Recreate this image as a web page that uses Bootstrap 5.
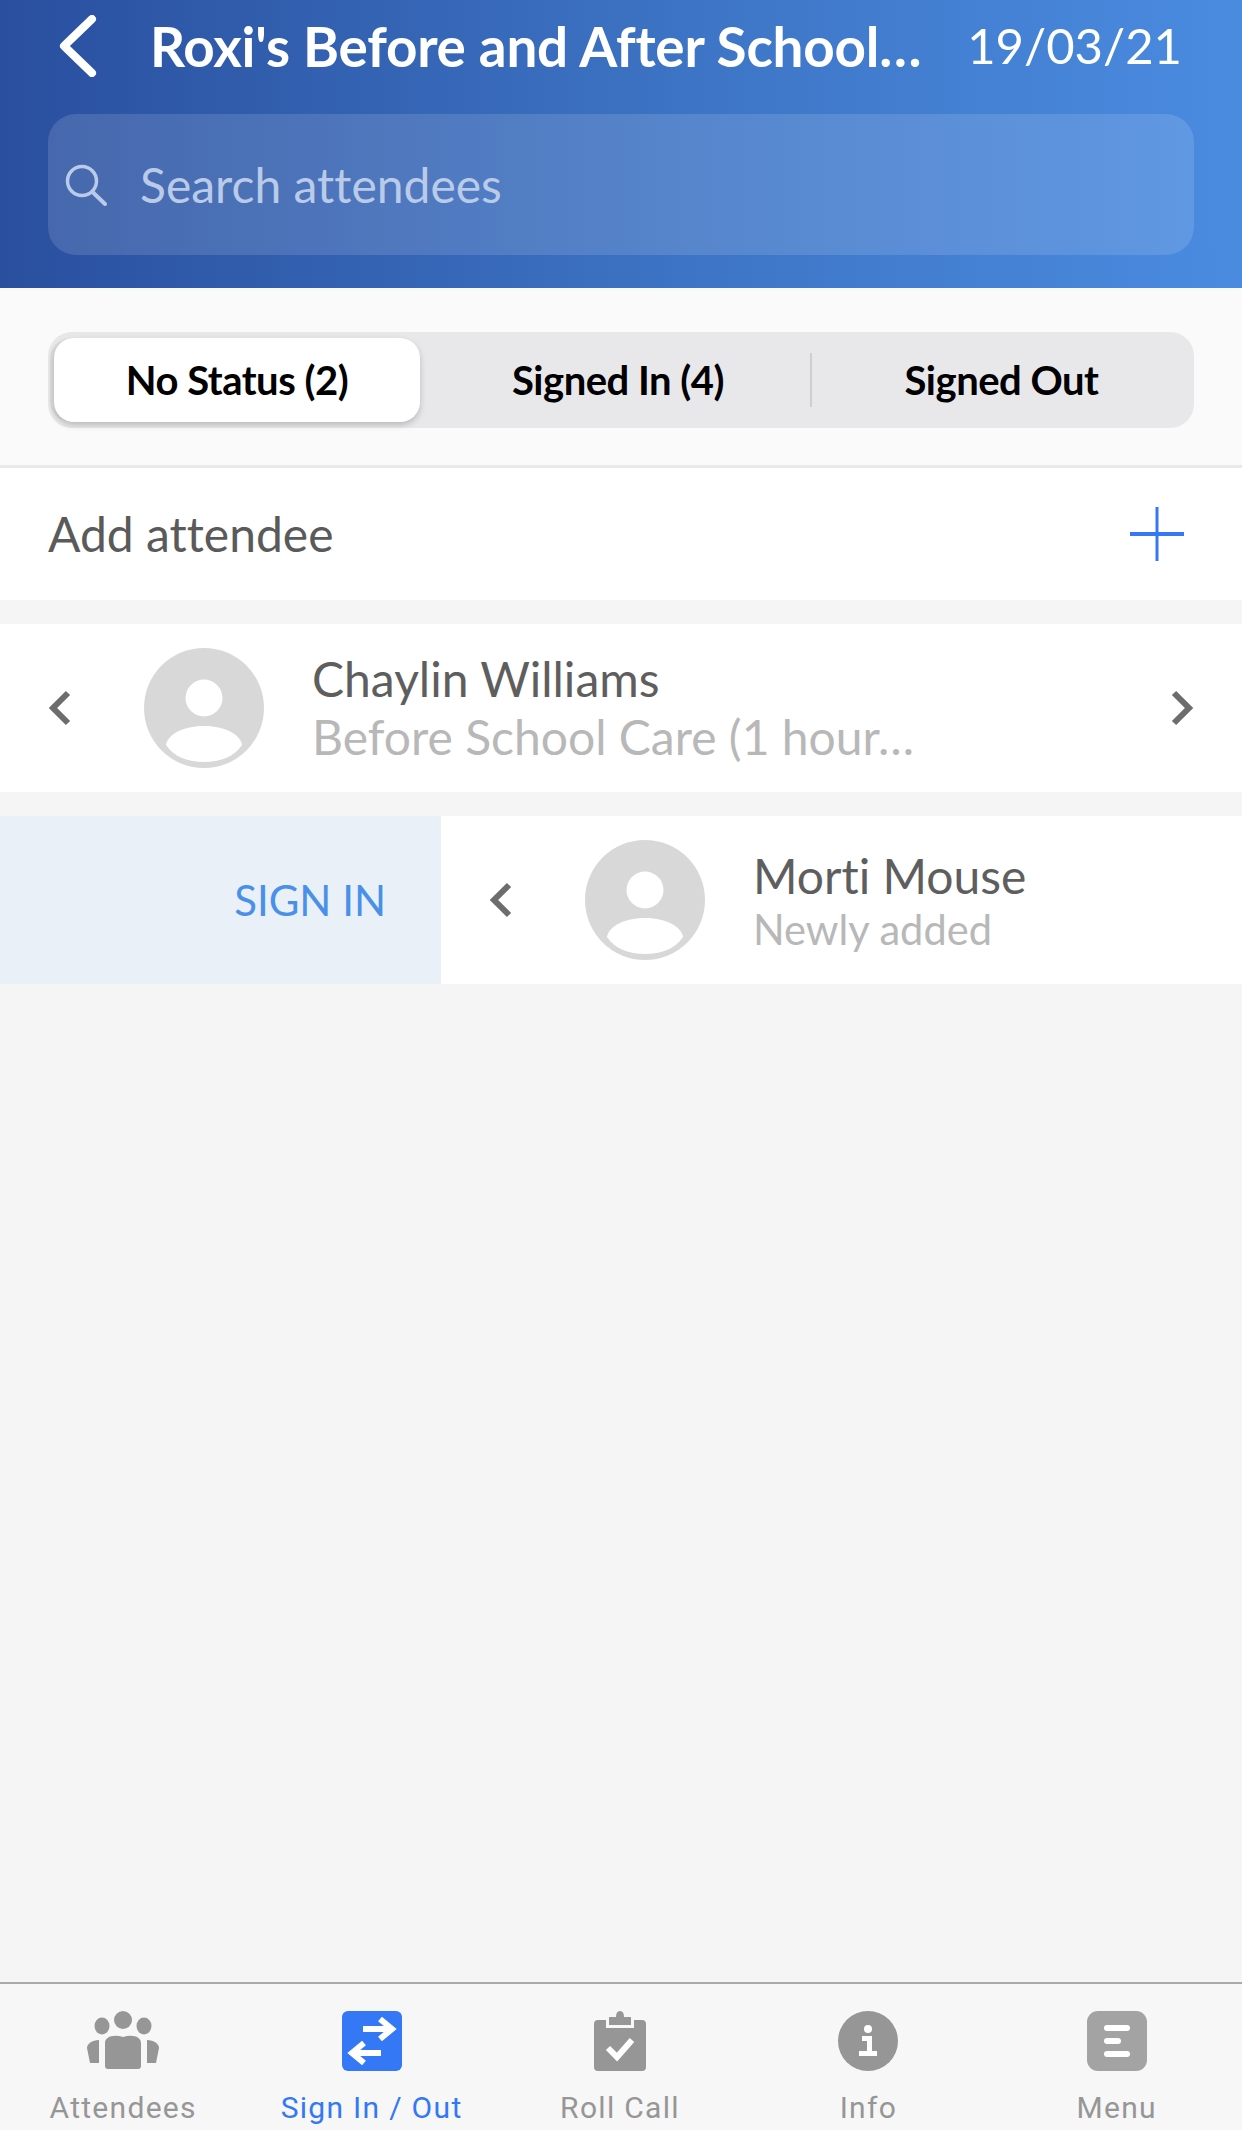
<!DOCTYPE html>
<html lang="en">
<head>
  <meta charset="UTF-8" />
  <meta name="viewport" content="width=device-width, initial-scale=1.0" />
  <title>Sign In / Out</title>
  <link rel="stylesheet" href="https://cdn.jsdelivr.net/npm/bootstrap@5.3.3/dist/css/bootstrap.min.css" />
  <style>
    html, body { height: 100%; }
    body {
      font-family: 'Lato', sans-serif;
      font-variant-ligatures: none;
      background-color: #f5f5f5;
      color: #5a5a5a;
    }
    .app-shell { width: 1242px; height: 2130px; overflow: hidden; }
    .top-head {
      height: 288px;
      padding: 0 48px;
      background: linear-gradient(90deg, #2a4f9f 0%, #3f77c8 60%, #4a8be0 100%);
      color: #fff;
    }
    .top-row { height: 114px; padding-bottom: 22px; }
    .back-btn { width: 102px; padding-left: 9px; }
    .top-title { font-size: 54.8px; font-weight: 700; white-space: nowrap; letter-spacing: -.2px; }
    .top-date { font-size: 49px; font-weight: 400; margin-left: auto; margin-right: 12px; white-space: nowrap; }
    .search-box {
      height: 141px;
      border-radius: 28px;
      background: rgba(255, 255, 255, .13);
      padding-left: 17px;
      font-size: 48px;
      color: #b9cbe8;
      gap: 33px;
    }
    .seg-wrap {
      height: 180px;
      padding: 44px 48px 36px;
      background: #fafafa;
      border-bottom: 3px solid #e9e9e9;
    }
    .seg-bar {
      height: 96px;
      border-radius: 24px;
      background: #e8e8ea;
      padding: 6px;
      color: #000;
      font-size: 40px;
      font-weight: 700;
      letter-spacing: -.5px;
    }
    .seg-item { height: 84px; }
    .seg-active {
      width: 366px;
      background: #fff;
      border-radius: 20px;
      box-shadow: 0 3px 6px rgba(0, 0, 0, .2), -5px 0 0 -1px #dcdcdc;
    }
    .seg-mid { width: 390px; padding-left: 6px; }
    .seg-last { flex: 1; padding-left: 3px; }
    .seg-line { width: 2px; height: 54px; background: #cfcfd1; }
    .add-row { height: 132px; padding: 0 58px 0 48px; background: #fff; font-size: 48px; margin-bottom: 24px; }
    .person-row { height: 168px; background: #fff; margin-bottom: 24px; overflow: hidden; }
    .person-shift { flex: 0 0 801px; width: 801px; }
    .sign-panel {
      flex: 0 0 441px;
      background: #e9f0f8;
      color: #4a90e8;
      font-size: 42px;
      padding-right: 55px;
      text-align: right;
      line-height: 168px;
    }
    .chev-slot { width: 48px; margin-left: 48px; }
    .chev-right { margin-left: auto; margin-right: 48px; }
    .avatar-pic { margin-left: 48px; margin-right: 48px; flex: 0 0 120px; }
    .person-name { font-size: 48px; line-height: 58px; color: #5e5e5e; }
    .person-sub { font-size: 48px; line-height: 58px; color: #b8b8b8; white-space: nowrap; }
    .person-sub-sm { font-size: 41.6px; line-height: 48px; }
    .tab-bar {
      height: 148px;
      margin-top: auto;
      margin-left: -1px;
      background: #f7f7f7;
      border-top: 2px solid #aaa;
      padding-top: 27px;
    }
    .tab-item {
      width: 248.4px;
      font-family: 'Roboto', sans-serif;
      font-size: 30px;
      letter-spacing: 1.3px;
      color: #969696;
    }
    .tab-icon { height: 60px; margin-bottom: 14px; }
    .tab-on { color: #3478f6; }
  </style>
</head>
<body>
  <div class="app-shell d-flex flex-column">
    <header class="top-head">
      <div class="top-row d-flex align-items-center">
        <div class="back-btn">
          <svg width="40" height="62" viewBox="0 0 40 62"><path d="M35 4 L7 31 L35 58" fill="none" stroke="#fff" stroke-width="8" stroke-linecap="round" stroke-linejoin="round"/></svg>
        </div>
        <div class="top-title">Roxi's Before and After School…</div>
        <div class="top-date">19/03/21</div>
      </div>
      <div class="search-box d-flex align-items-center">
        <svg width="42" height="42" viewBox="0 0 42 42"><circle cx="17" cy="17" r="14.5" fill="none" stroke="#b9cbe8" stroke-width="3.5"/><path d="M27.5 28 L40 40" stroke="#b9cbe8" stroke-width="4" stroke-linecap="round"/></svg>
        <span>Search attendees</span>
      </div>
    </header>

    <div class="seg-wrap">
      <div class="seg-bar d-flex align-items-center">
        <div class="seg-item seg-active d-flex align-items-center justify-content-center">No Status (2)</div>
        <div class="seg-item seg-mid d-flex align-items-center justify-content-center">Signed In (4)</div>
        <div class="seg-line"></div>
        <div class="seg-item seg-last d-flex align-items-center justify-content-center">Signed Out</div>
      </div>
    </div>

    <div class="add-row d-flex align-items-center justify-content-between">
      <span>Add attendee</span>
      <svg width="54" height="54" viewBox="0 0 54 54"><path d="M27 0V54" stroke="#3478f6" stroke-width="3"/><path d="M0 27H54" stroke="#3478f6" stroke-width="4"/></svg>
    </div>

    <div class="person-row d-flex align-items-center">
      <div class="chev-slot">
        <svg width="24" height="36" viewBox="0 0 24 36"><path d="M20 3 L5 18 L20 33" fill="none" stroke="#6d6d6d" stroke-width="6"/></svg>
      </div>
      <svg class="avatar-pic" width="120" height="120" viewBox="0 0 120 120"><circle cx="60" cy="60" r="60" fill="#d8d8d8"/><circle cx="60" cy="50" r="18.5" fill="#fff"/><path d="M22 97 C24 85 42 78 60 78 C78 78 96 85 98 97 C90 109 76 114 60 114 C44 114 30 109 22 97Z" fill="#fff"/></svg>
      <div>
        <div class="person-name">Chaylin Williams</div>
        <div class="person-sub">Before School Care (1 hour…</div>
      </div>
      <div class="chev-right">
        <svg width="24" height="36" viewBox="0 0 24 36"><path d="M4 3 L19 18 L4 33" fill="none" stroke="#6d6d6d" stroke-width="6"/></svg>
      </div>
    </div>

    <div class="person-row d-flex">
      <div class="sign-panel">SIGN IN</div>
      <div class="person-shift d-flex align-items-center">
        <div class="chev-slot">
          <svg width="24" height="36" viewBox="0 0 24 36"><path d="M20 3 L5 18 L20 33" fill="none" stroke="#6d6d6d" stroke-width="6"/></svg>
        </div>
        <svg class="avatar-pic" width="120" height="120" viewBox="0 0 120 120"><circle cx="60" cy="60" r="60" fill="#d8d8d8"/><circle cx="60" cy="50" r="18.5" fill="#fff"/><path d="M22 97 C24 85 42 78 60 78 C78 78 96 85 98 97 C90 109 76 114 60 114 C44 114 30 109 22 97Z" fill="#fff"/></svg>
        <div>
          <div class="person-name">Morti Mouse</div>
          <div class="person-sub person-sub-sm">Newly added</div>
        </div>
      </div>
    </div>

    <nav class="tab-bar d-flex">
      <div class="tab-item text-center">
        <div class="tab-icon">
          <svg width="72" height="60" viewBox="0 0 72 60" fill="#969696">
            <circle cx="36" cy="9" r="9"/><ellipse cx="15" cy="15" rx="7.5" ry="8.5"/><ellipse cx="57" cy="15" rx="7.5" ry="8.5"/>
            <path d="M18 32 C18 26 26 23 36 26 C46 23 54 26 54 32 V55 Q54 58 51 58 H21 Q18 58 18 55Z"/>
            <path d="M12 29 V52 H3 L0 37 C0 33 5 29 12 29Z"/><path d="M60 29 V52 H69 L72 37 C72 33 67 29 60 29Z"/>
          </svg>
        </div>
        Attendees
      </div>
      <div class="tab-item tab-on text-center">
        <div class="tab-icon">
          <svg width="60" height="60" viewBox="0 0 60 60"><rect width="60" height="60" rx="6" fill="#3478f6"/><path d="M21 18H48M38 8 L50 18 L38 28" fill="none" stroke="#fff" stroke-width="6"/><path d="M39 42H12M22 32 L10 42 L22 52" fill="none" stroke="#fff" stroke-width="6"/></svg>
        </div>
        Sign In / Out
      </div>
      <div class="tab-item text-center">
        <div class="tab-icon">
          <svg width="52" height="60" viewBox="0 0 52 60"><path d="M4 9 H12 V17 H40 V9 H48 Q52 9 52 13 V56 Q52 60 48 60 H4 Q0 60 0 56 V13 Q0 9 4 9Z" fill="#969696"/><path d="M15 14 V6 H22 Q22 0 26 0 Q30 0 30 6 H37 V14Z" fill="#969696"/><path d="M14 37 L23 46 L38 29" fill="none" stroke="#fff" stroke-width="6"/></svg>
        </div>
        Roll Call
      </div>
      <div class="tab-item text-center">
        <div class="tab-icon">
          <svg width="60" height="60" viewBox="0 0 60 60"><circle cx="30" cy="30" r="30" fill="#969696"/><circle cx="30" cy="18" r="4" fill="#fff"/><path d="M24 25H34V40H39V45H21V40H29V30H24Z" fill="#fff"/></svg>
        </div>
        Info
      </div>
      <div class="tab-item text-center">
        <div class="tab-icon">
          <svg width="60" height="60" viewBox="0 0 60 60" fill="#fff"><rect width="60" height="60" rx="11" fill="#a3a3a3"/><rect x="17" y="14" width="26" height="6" rx="3"/><rect x="17" y="27" width="17" height="6" rx="3"/><rect x="17" y="40" width="26" height="6" rx="3"/></svg>
        </div>
        Menu
      </div>
    </nav>
  </div>
</body>
</html>
